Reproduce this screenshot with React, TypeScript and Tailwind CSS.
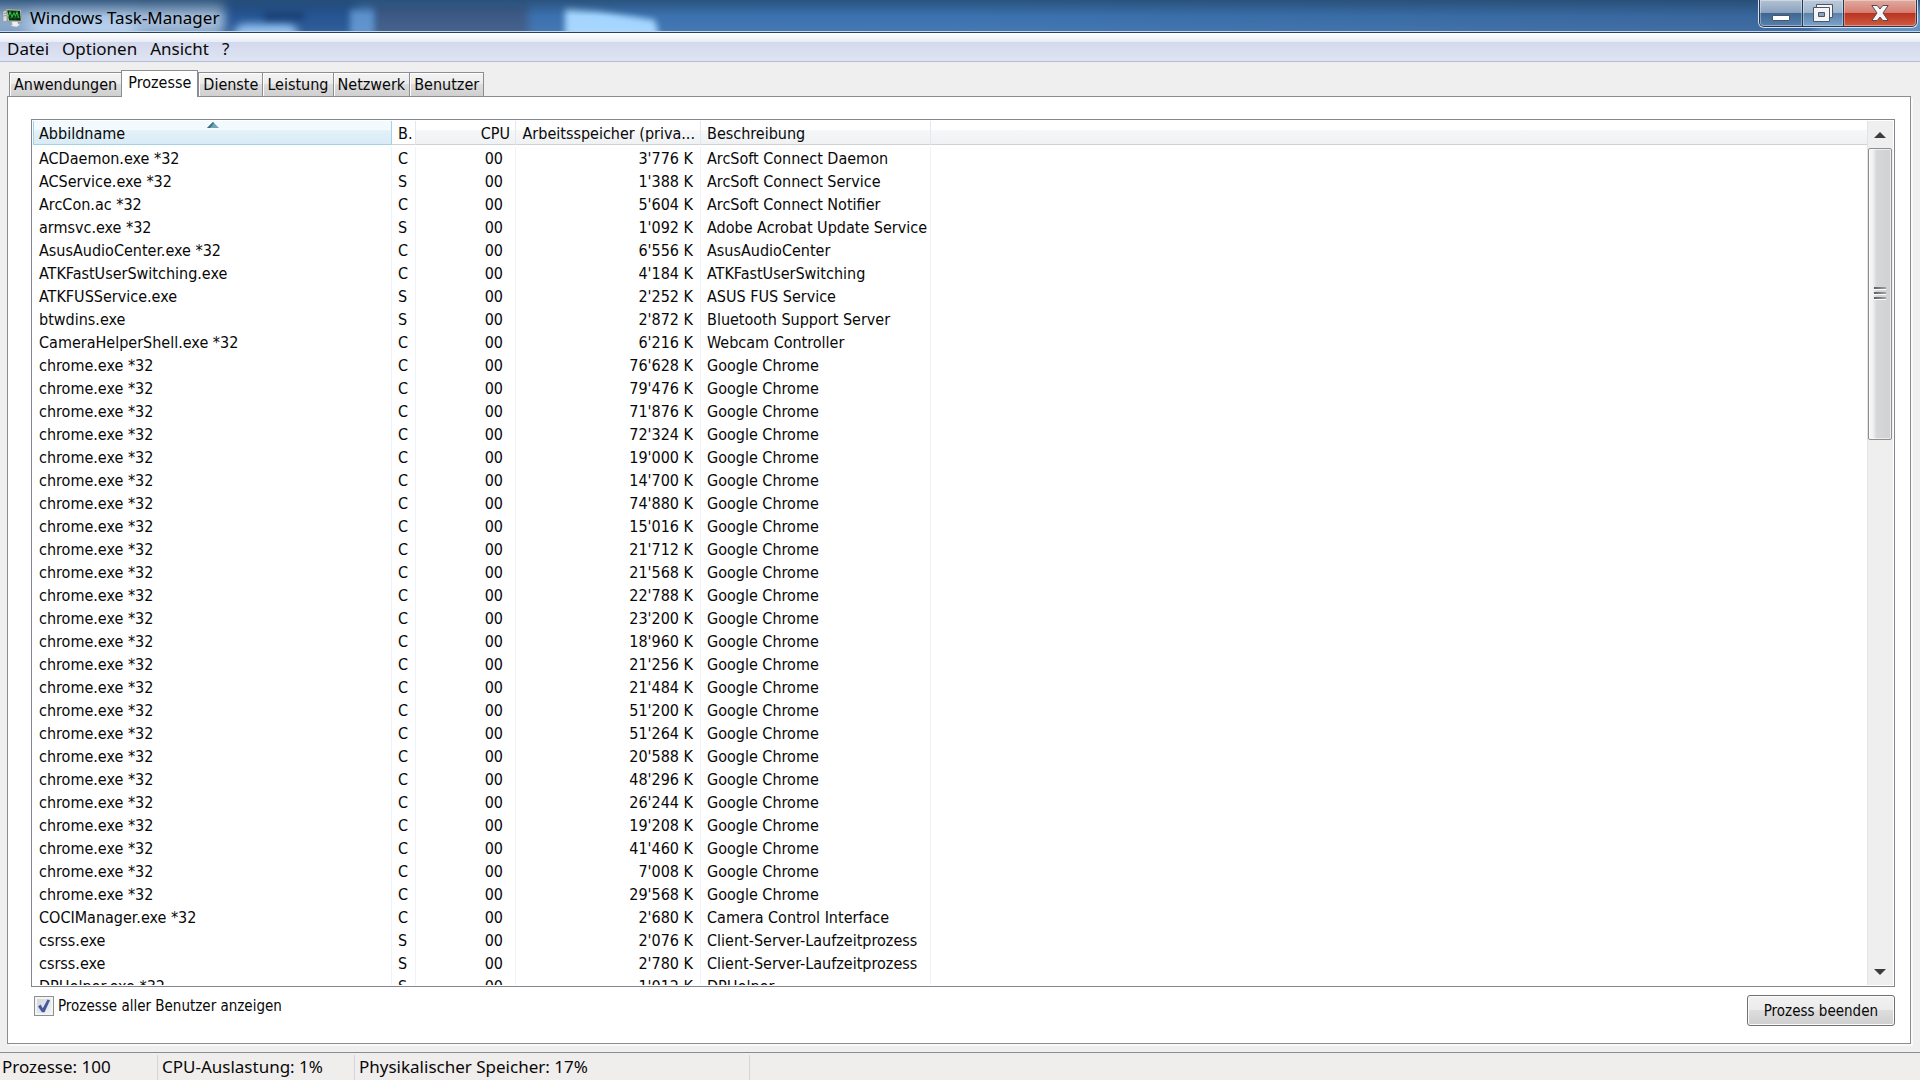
import { useState } from "react";
import clsx from "clsx";

type Row = [name: string, user: string, memory: string, description: string];

const chromeMemory = [
  "76'628", "79'476", "71'876", "72'324", "19'000", "14'700", "74'880", "15'016",
  "21'712", "21'568", "22'788", "23'200", "18'960", "21'256", "21'484", "51'200",
  "51'264", "20'588", "48'296", "26'244", "19'208", "41'460", "7'008", "29'568",
];

const rows: Row[] = [
  ["ACDaemon.exe *32", "C", "3'776", "ArcSoft Connect Daemon"],
  ["ACService.exe *32", "S", "1'388", "ArcSoft Connect Service"],
  ["ArcCon.ac *32", "C", "5'604", "ArcSoft Connect Notifier"],
  ["armsvc.exe *32", "S", "1'092", "Adobe Acrobat Update Service"],
  ["AsusAudioCenter.exe *32", "C", "6'556", "AsusAudioCenter"],
  ["ATKFastUserSwitching.exe", "C", "4'184", "ATKFastUserSwitching"],
  ["ATKFUSService.exe", "S", "2'252", "ASUS FUS Service"],
  ["btwdins.exe", "S", "2'872", "Bluetooth Support Server"],
  ["CameraHelperShell.exe *32", "C", "6'216", "Webcam Controller"],
  ...chromeMemory.map((m): Row => ["chrome.exe *32", "C", m, "Google Chrome"]),
  ["COCIManager.exe *32", "C", "2'680", "Camera Control Interface"],
  ["csrss.exe", "S", "2'076", "Client-Server-Laufzeitprozess"],
  ["csrss.exe", "S", "2'780", "Client-Server-Laufzeitprozess"],
  ["DPHelper.exe *32", "S", "1'012", "DPHelper"],
];

const tabs = ["Anwendungen", "Prozesse", "Dienste", "Leistung", "Netzwerk", "Benutzer"];

function AppIcon() {
  return (
    <svg width="20" height="20" viewBox="0 0 20 20" aria-hidden="true">
      <path d="M1 3.5 5 2v11l-4 1z" fill="#d9dcd8" stroke="#8b9296" strokeWidth=".6" />
      <path d="M1.6 5.5 4 5M1.6 8 4 7.500" stroke="#777f80" strokeWidth=".8" />
      <path d="m4 1 15 .7 1 12.300-14-.5z" fill="#cfd6d0" stroke="#858d88" strokeWidth=".7" />
      <path d="m5.200 2.200 12.800.6.800 10-11.800-.4z" fill="#0b2d12" />
      <path d="m6 9 2-5 2 5 2-4 1.500 3L15 4l1.500 6" fill="none" stroke="#35c745" strokeWidth="1.100" />
      <path d="M5.800 6.500h12M6.300 9.500h12M9 3v9M13 3.200v9" stroke="#1f7a2c" strokeWidth=".5" />
      <path d="M9.500 13.500h6l.8 2.500 2 .8-4 2.200-6-1.200 2-1z" fill="#eef0ee" stroke="#a5aaa6" strokeWidth=".5" />
    </svg>
  );
}

function TitleBar() {
  return (
    <header className="relative flex h-[33px] shrink-0 items-start justify-between overflow-hidden border-b border-[#26405f] bg-linear-to-r from-[#3b70ae] via-[#3b72af] to-[#376499]">
      {/* what shines through the glass */}
      <div className="absolute inset-0 overflow-hidden">
        <div className="absolute left-[218px] top-0 h-9 w-[140px] bg-[#265593] blur-[4px]" />
        <div className="absolute -left-4 top-0 h-9 w-[240px] bg-[#86a5c8] blur-[6px]" />
        <div className="absolute left-7 top-3 h-7 w-28 bg-[#b5cfec] blur-[8px]" />
        <div className="absolute left-[140px] top-3 h-4 w-20 bg-[#a9bfdb] blur-[6px]" />
        <div className="absolute left-[234px] top-6 h-5 w-16 rounded-full bg-[#8fc0f0] blur-[4px]" />
        <div className="absolute left-[264px] top-3 h-2 w-10 bg-[#1b4176] blur-[3px]" />
        <div className="absolute left-[372px] top-1 h-9 w-[156px] bg-[#3d5a86] blur-[4px]" />
        <div className="absolute left-[350px] top-2 h-7 w-6 bg-[#5b91cb] blur-[3px]" />
        <svg className="absolute left-[560px] top-0 blur-[3px]" width="110" height="40">
          <path d="M5 8 38 11 95 20 100 40H5z" fill="#a3d5ff" />
        </svg>
        <div className="absolute -right-2 top-0 h-9 w-28 bg-[#7aa9d6] opacity-70 blur-[6px]" />
        <div className="absolute inset-0 bg-linear-to-b from-[#1f3f5e]/60 via-transparent to-white/5" />
        <div className="absolute inset-x-0 bottom-0 h-px bg-[#c4d6ea]" />
      </div>
      <div className="relative flex h-8 items-center gap-2 pt-1 pl-0.5">
        <AppIcon />
        <h1 className="text-[17px] leading-6 text-black">Windows Task-Manager</h1>
      </div>
      <div className="relative mr-0.5 flex h-7 rounded-b-md border border-t-0 border-[#d5e1ee] bg-[#26384f] px-px pb-px">
        <button
          aria-label="Minimieren"
          className="flex w-[43px] items-center justify-center rounded-bl border-r border-[#26384f] bg-[linear-gradient(#b4c2d2,#8ba3bf_48%,#3f6590_50%,#5680ad)] shadow-[inset_0_0_0_1px_rgba(255,255,255,0.35)]"
        >
          <svg width="18" height="26" viewBox="0 0 18 26">
            <rect x=".5" y="15.500" width="17" height="5" rx=".5" fill="#fff" stroke="#4d5764" />
          </svg>
        </button>
        <button
          aria-label="Verkleinern"
          className="flex w-[41px] items-center justify-center border-r border-[#26384f] bg-[linear-gradient(#bccad9,#9fb5cd_48%,#5b81aa_50%,#7ba3cb)] shadow-[inset_0_0_0_1px_rgba(255,255,255,0.35)]"
        >
          <svg width="20" height="26" viewBox="0 0 20 26" stroke="#4d5764">
            <path d="M3.500 4.500h16v13h-16z" fill="#f4f5f6" />
            <path d="M.5 7.500h16v14H.5z" fill="#f4f5f6" />
            <path d="M5.500 12.500h6v4h-6z" fill="#8ba3bf" />
          </svg>
        </button>
        <button
          aria-label="Schließen"
          className="flex w-[72px] items-center justify-center rounded-br bg-[linear-gradient(#e0aaa1,#d57f72_48%,#b93320_50%,#d05a40)] shadow-[inset_0_0_0_1px_rgba(255,255,255,0.35)]"
        >
          <svg width="18" height="26" viewBox="0 0 18 26">
            <path
              d="M.8 5.500h5.400L9 9l2.800-3.500h5.400L12 13l5.200 7.500h-5.400L9 17l-2.800 3.500H.8L6 13z"
              fill="#f5f5f5"
              stroke="#5a4a50"
            />
          </svg>
        </button>
      </div>
    </header>
  );
}

function MenuBar() {
  return (
    <nav className="flex h-[29px] shrink-0 items-center border-b border-[#b6bcd6] bg-[linear-gradient(#ffffff,#e8ecf6_9px,#d3d9ec_9px,#dfe4f3)] pt-1 text-[17px] leading-6">
      {["Datei", "Optionen", "Ansicht", "?"].map((item) => (
        <button key={item} className="pr-1.5 pl-[7px]">
          {item}
        </button>
      ))}
    </nav>
  );
}

function Scrollbar() {
  return (
    <div className="flex w-[26px] shrink-0 flex-col border-l border-[#e3e3e3] bg-[#efefef] pr-px">
      <button aria-label="Nach oben" className="flex h-[27px] shrink-0 items-center justify-center">
        <svg width="12" height="6" viewBox="0 0 12 6">
          <path d="M6 0 12 6H0z" fill="#3c3c3c" />
        </svg>
      </button>
      <div className="min-h-0 flex-1">
        <div className="flex h-[36%] items-center justify-center rounded-xs border border-[#8e8e8e] bg-linear-to-r from-[#f4f4f4] from-15% via-[#d6d7d9] via-35% to-[#cfd1d3] shadow-[inset_0_0_0_1px_rgba(255,255,255,0.6)]">
          <div className="flex flex-col gap-0.5">
            {[0, 1, 2].map((i) => (
              <span key={i} className="h-[3px] w-3 border-b border-white bg-linear-to-r from-[#5f5f5f] to-[#a3a3a3]" />
            ))}
          </div>
        </div>
      </div>
      <button aria-label="Nach unten" className="flex h-[27px] shrink-0 items-center justify-center">
        <svg width="12" height="6" viewBox="0 0 12 6">
          <path d="M0 0h12L6 6z" fill="#3c3c3c" />
        </svg>
      </button>
    </div>
  );
}

const th =
  "h-6 whitespace-nowrap border-r border-b border-r-[#e3e8ee] border-b-[#d0d2d5] bg-[linear-gradient(#ffffff_40%,#f6f7f9_40%,#f0f1f3)] p-0 pt-0.5 pl-1.5 font-normal";
const td = "h-[23px] whitespace-nowrap border-r border-[#edf3f8] p-0 pl-1.5";

function ProcessTable() {
  return (
    <table className="w-full table-fixed border-separate border-spacing-0 text-base leading-5">
      <colgroup>
        <col className="w-[359px]" />
        <col className="w-6" />
        <col className="w-[100px]" />
        <col className="w-[185px]" />
        <col className="w-[230px]" />
        <col />
      </colgroup>
      <thead>
        <tr>
          <th className="relative h-6 border-x border-b border-[#a3d3e6] bg-[linear-gradient(#f3fafd_40%,#e4f2f9_40%,#d8ebf5)] p-0 pt-0.5 pl-[5px] text-left font-normal">
            Abbildname
            <svg className="absolute top-px left-1/2 -translate-x-1/2" width="12" height="6" viewBox="0 0 12 6">
              <path d="M6 0 12 6H0z" fill="#6fa3b8" />
              <path d="M6 0 0 6h3l4-5z" fill="#3f6d82" />
            </svg>
          </th>
          <th className="h-6 border-r border-b border-r-[#e3e8ee] border-b-[#d0d2d5] p-0 pt-0.5 pl-1.5 text-left font-normal">B.</th>
          <th className={clsx(th, "pr-[5px] text-right")}>CPU</th>
          <th className={clsx(th, "pr-[5px] text-right")}>Arbeitsspeicher (priva...</th>
          <th className={clsx(th, "text-left")}>Beschreibung</th>
          <th className="h-6 border-b border-[#d0d2d5] bg-[linear-gradient(#ffffff_40%,#f6f7f9_40%,#f0f1f3)] p-0" />
        </tr>
      </thead>
      <tbody className="before:block before:h-0.5">
        {rows.map(([name, user, memory, description], i) => (
          <tr key={i}>
            <td className={td}>{name}</td>
            <td className={td}>{user}</td>
            <td className={clsx(td, "pr-3 text-right")}>00</td>
            <td className={clsx(td, "pr-[7px] text-right")}>{memory} K</td>
            <td className={td}>{description}</td>
            <td />
          </tr>
        ))}
      </tbody>
    </table>
  );
}

export default function App() {
  const [active, setActive] = useState("Prozesse");
  const [showAll, setShowAll] = useState(true);

  return (
    <div className="flex h-screen flex-col overflow-hidden bg-[#efefef] font-['Noto_Sans',sans-serif] text-[#080808]">
      <TitleBar />
      <MenuBar />

      <main className="flex min-h-0 flex-1 flex-col pt-2 pr-[9px] pb-2 pl-[7px] font-['DejaVu_Sans_Condensed','DejaVu_Sans',sans-serif] text-[15px] leading-5">
        <div role="tablist" className="relative flex h-[27px] shrink-0 items-end pl-0.5 text-base leading-5">
          {tabs.map((tab) => (
            <button
              key={tab}
              role="tab"
              aria-selected={tab === active}
              onClick={() => setActive(tab)}
              className={clsx(
                "border border-[#8b8d90]",
                tab === active
                  ? "h-[27px] border-b-0 bg-white px-1.5 pb-0.5"
                  : "-mr-px h-[25px] bg-[linear-gradient(#f3f3f3,#ebebeb_50%,#dcdcdc_50%,#d0d0d0)] px-1 shadow-[inset_1px_1px_0_#fff]"
              )}
            >
              {tab}
            </button>
          ))}
        </div>

        <section className="-mt-px flex min-h-0 flex-1 flex-col border border-[#8b8d90] bg-white pt-[22px] pr-[15px] pl-[23px] shadow-[2px_2px_0_#f9f9f9]">
          <div className="flex min-h-0 flex-1 border border-[#828790] p-px">
            <div className="min-w-0 flex-1 overflow-hidden">
              <ProcessTable />
            </div>
            <Scrollbar />
          </div>
          <div className="flex shrink-0 items-start justify-between pt-2 pb-[17px]">
            <label className="flex items-center gap-1 pt-px pl-[3px]">
              <span className="relative flex size-5">
                <input
                  type="checkbox"
                  checked={showAll}
                  onChange={(e) => setShowAll(e.target.checked)}
                  className="size-5 appearance-none border border-[#8e8f8f] bg-linear-to-br from-[#cdd3dc] to-[#f4f5f7] shadow-[inset_0_0_0_2px_#f4f4f4]"
                />
                {showAll && (
                  <svg className="pointer-events-none absolute inset-0" width="20" height="20" viewBox="0 0 20 20">
                    <path d="m4 10.500 2.500-2 2.300 3.800L13.500 3.500l2.500.8-5.500 12H8z" fill="#45599c" />
                  </svg>
                )}
              </span>
              Prozesse aller Benutzer anzeigen
            </label>
            <button className="h-[31px] rounded-[3px] border border-[#707070] bg-[linear-gradient(#f2f2f2,#ebebeb_50%,#dddddd_50%,#cfcfcf)] px-4 shadow-[inset_0_0_0_1px_#fbfbfb]">
              Prozess beenden
            </button>
          </div>
        </section>
      </main>

      <footer className="flex h-7 shrink-0 border-t border-[#8b8d90] bg-[#f0eded] pt-0.5 text-[17px] leading-6">
        <span className="w-[158px] border-r border-[#d6d5d9] pl-0.5">Prozesse: 100</span>
        <span className="w-[197px] border-r border-[#d6d5d9] pl-1">CPU-Auslastung: 1%</span>
        <span className="w-[395px] border-r border-[#d6d5d9] pl-1">Physikalischer Speicher: 17%</span>
      </footer>
    </div>
  );
}
